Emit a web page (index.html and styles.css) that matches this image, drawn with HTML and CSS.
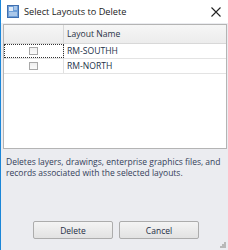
FILE: index.html
```html
<!DOCTYPE html>
<html>
<head>
<meta charset="utf-8">
<link rel="stylesheet" href="styles.css">
</head>
<body>
<div class="window">
  <div class="titlebar">
    <svg class="appicon" width="12" height="13" viewBox="0 0 12 13">
      <rect x="0.5" y="0.5" width="11" height="12" fill="#6f9fd8" stroke="#3f6fb0"/>
      <rect x="2" y="2" width="4" height="4" fill="#dfeaf7"/>
      <path d="M7 2h3M7 4h3M2 8h8M2 10h8" stroke="#e8f0fa" stroke-width="1"/>
    </svg>
    <span class="title">Select Layouts to Delete</span>
    <svg class="close" width="10" height="10" viewBox="0 0 10 10">
      <path d="M0.5 0.5L9.5 9.5M9.5 0.5L0.5 9.5" stroke="#222" stroke-width="1.1"/>
    </svg>
  </div>
  <div class="content">
    <div class="grid">
      <div class="row header">
        <div class="cell sel"></div>
        <div class="cell name">Layout Name</div>
      </div>
      <div class="row">
        <div class="cell sel focus"><span class="chk"></span></div>
        <div class="cell name">RM-SOUTHH</div>
      </div>
      <div class="row">
        <div class="cell sel"><span class="chk"></span></div>
        <div class="cell name">RM-NORTH</div>
      </div>
    </div>
    <p class="desc">Deletes layers, drawings, enterprise graphics files, and records associated with the selected layouts.</p>
    <div class="buttons">
      <button class="btn">Delete</button>
      <button class="btn">Cancel</button>
    </div>
    <svg class="grip" width="6" height="6" viewBox="0 0 6 6">
      <rect x="4" y="0" width="2" height="2" fill="#b8b8b8"/>
      <rect x="2" y="2" width="2" height="2" fill="#b8b8b8"/>
      <rect x="4" y="2" width="2" height="2" fill="#b8b8b8"/>
      <rect x="0" y="4" width="2" height="2" fill="#b8b8b8"/>
      <rect x="2" y="4" width="2" height="2" fill="#b8b8b8"/>
      <rect x="4" y="4" width="2" height="2" fill="#b8b8b8"/>
    </svg>
  </div>
</div>
</body>
</html>
```
FILE: styles.css
```css
html, body {
  margin: 0;
  padding: 0;
}
body {
  width: 228px;
  height: 250px;
  overflow: hidden;
  font-family: "Open Sans", "Noto Sans", sans-serif;
  background: #ebecf0;
}
.window {
  box-sizing: border-box;
  width: 228px;
  height: 250px;
  border-left: 1px solid #1b86d8;
  display: flex;
  flex-direction: column;
}
.titlebar {
  height: 23px;
  background: #ffffff;
  display: flex;
  align-items: center;
  padding-left: 6px;
  padding-right: 7px;
}
.appicon {
  display: block;
  margin-right: 5px;
}
.title {
  font-size: 9.2px;
  color: #1a1a1a;
  flex: 1;
}
.close {
  display: block;
}
.content {
  flex: 1;
  position: relative;
  padding: 1px 1px 0 2px;
  display: flex;
  flex-direction: column;
}
.grid {
  height: 125px;
  box-sizing: border-box;
  border: 1px solid #b4b4b4;
  background: #ffffff;
}
.row {
  display: flex;
  height: 15px;
  border-bottom: 1px solid #e3e3e3;
  box-sizing: border-box;
}
.row.header {
  height: 19px;
  background: linear-gradient(#f6f6f6, #ececec);
  border-bottom: 1px solid #d8d8d8;
}
.cell {
  box-sizing: border-box;
  display: flex;
  align-items: center;
  font-size: 8.6px;
  color: #23324a;
}
.cell.sel {
  width: 60px;
  justify-content: center;
  border-right: 1px solid #e0e0e0;
}
.header .cell.sel {
  border-right-color: #d8d8d8;
}
.cell.name {
  padding-left: 3px;
  flex: 1;
}
.header .cell.name {
  color: #2a3346;
}
.cell.focus {
  outline: 1px dotted #333;
  outline-offset: -1px;
}
.chk {
  display: block;
  width: 9px;
  height: 8px;
  box-sizing: border-box;
  border: 1px solid #a8a8a8;
  background: linear-gradient(#efefef, #fbfbfb);
}
.desc {
  margin: 7px -2px 0 3px;
  font-size: 8.5px;
  line-height: 11px;
  color: #34405a;
}
.buttons {
  margin-top: auto;
  margin-bottom: 11px;
  display: flex;
  gap: 6px;
  padding-left: 30px;
}
.btn {
  width: 80px;
  height: 18px;
  box-sizing: border-box;
  border: 1px solid #acacac;
  border-radius: 2px;
  background: linear-gradient(#f4f4f4, #e2e2e2);
  font-family: "Open Sans", "Noto Sans", sans-serif;
  font-size: 8.5px;
  color: #1f2d45;
  padding: 0;
}
.grip {
  position: absolute;
  right: 2px;
  bottom: 2px;
}
```
